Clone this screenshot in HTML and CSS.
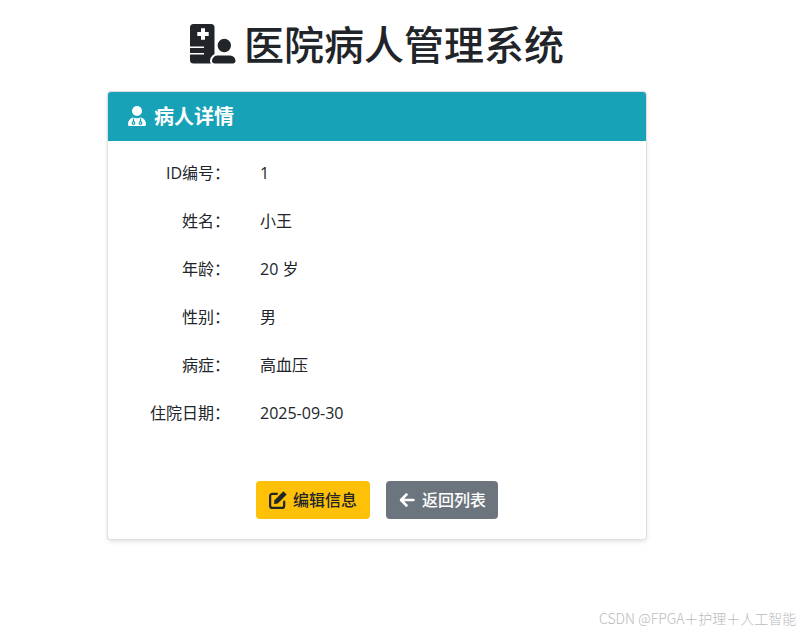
FILE: index.html
```html
<!DOCTYPE html>
<html lang="zh-CN">
<head>
<meta charset="utf-8">
<title>病人详情</title>
<link rel="stylesheet" href="styles.css">
</head>
<body>
<main class="page">
  <h1 class="title">
    <svg class="title-icon" viewBox="0 0 46 40" aria-hidden="true">
      <path fill="#212529" d="M3.500 0H21A3.500 3.500 0 0 1 24.500 3.500V36A3.500 3.500 0 0 1 21 39.500H3.500A3.500 3.500 0 0 1 0 36V3.500A3.500 3.500 0 0 1 3.500 0Z"/>
      <path fill="#fff" d="M11 4.300H15V8H18.700V12H15V15.700H11V12H7.300V8H11Z"/>
      <path fill="#fff" d="M0 22.500H14V24H0ZM0 29H14V30.500H0Z"/>
      <circle fill="#212529" stroke="#fff" stroke-width="2" cx="34.300" cy="21.500" r="7.700"/>
      <path fill="#212529" stroke="#fff" stroke-width="2" d="M28 30.500H40A6.500 6.500 0 0 1 46.500 37A3.500 3.500 0 0 1 43 40.500H24.500A3.500 3.500 0 0 1 21 37A6.500 6.500 0 0 1 28 30.500Z"/>
    </svg>
    <span>医院病人管理系统</span>
  </h1>
  <section class="card">
    <header class="card-header">
      <svg class="header-icon" viewBox="0 0 18 20" aria-hidden="true">
        <circle fill="#fff" cx="9" cy="5" r="5"/>
        <path fill="#fff" d="M5 11.500Q9 13 13 11.500Q18 13 18 18.500A1.500 1.500 0 0 1 16.500 20H1.500A1.500 1.500 0 0 1 0 18.500Q0 13 5 11.500Z"/>
        <g fill="none" stroke="#17a2b8" stroke-width="1.200">
          <circle cx="5.500" cy="17" r="1.300"/>
          <circle cx="12.500" cy="17" r="1.300"/>
          <path d="M5.500 15.500V12.500M12.500 15.500V12.500"/>
        </g>
      </svg>
      <span>病人详情</span>
    </header>
    <div class="card-body">
      <dl class="details">
        <div class="row"><dt>ID编号：</dt><dd>1</dd></div>
        <div class="row"><dt>姓名：</dt><dd>小王</dd></div>
        <div class="row"><dt>年龄：</dt><dd>20 岁</dd></div>
        <div class="row"><dt>性别：</dt><dd>男</dd></div>
        <div class="row"><dt>病症：</dt><dd>高血压</dd></div>
        <div class="row"><dt>住院日期：</dt><dd>2025-09-30</dd></div>
      </dl>
      <div class="actions">
        <a class="btn btn-warning" href="#">
          <svg class="btn-icon-lg" viewBox="0 0 16 16" aria-hidden="true">
            <path fill="none" stroke="currentColor" stroke-width="2" stroke-linecap="round" d="M13.500 9.500V13A2 2 0 0 1 11.500 15H3A2 2 0 0 1 1 13V4.500A2 2 0 0 1 3 2.500H7"/>
            <path fill="currentColor" d="M12.800 0.300L15.700 3.200L7.800 11.100L4.400 11.600L4.900 8.200Z"/>
          </svg>
          <span>编辑信息</span>
        </a>
        <a class="btn btn-secondary" href="#">
          <svg class="btn-icon" viewBox="0 0 16 16" aria-hidden="true">
            <path fill="none" stroke="currentColor" stroke-width="2.500" stroke-linecap="round" stroke-linejoin="round" d="M14.500 8H2M7.500 2.500L2 8L7.500 13.500"/>
          </svg>
          <span>返回列表</span>
        </a>
      </div>
    </div>
  </section>
</main>
<div class="watermark">CSDN @FPGA＋护理＋人工智能</div>
</body>
</html>
```
FILE: styles.css
```css
* { box-sizing: border-box; }
html, body { margin: 0; height: 100%; overflow: hidden; }
body {
  background: #fff;
  color: #212529;
  font-family: "Open Sans", "Noto Sans CJK SC", sans-serif;
  font-size: 16px;
  line-height: 24px;
}
.page { width: 540px; margin-left: 107px; padding-top: 19px; }
.title {
  display: flex;
  align-items: center;
  justify-content: center;
  gap: 8px;
  margin: 0 0 24px;
  height: 48px;
  font-size: 40px;
  line-height: 48px;
  font-weight: 500;
  font-family: "Noto Sans CJK SC", sans-serif;
}
.title-icon { width: 46px; height: 40px; flex: none; margin-top: 2px; }
.card {
  height: 449px;
  border: 1px solid rgba(0,0,0,.125);
  border-radius: 4px;
  box-shadow: 0 2px 4px rgba(0,0,0,.1);
  background: #fff;
  overflow: hidden;
}
.card-header {
  display: flex;
  align-items: center;
  gap: 8px;
  height: 49px;
  padding: 0 20px 2px;
  background: #17a2b8;
  color: #fff;
  font-size: 20px;
  font-weight: 700;
  font-family: "Noto Sans CJK SC", sans-serif;
}
.header-icon { width: 18px; height: 20px; flex: none; }
.card-body { padding: 20px 0; }
.details { margin: 0; }
.row { display: flex; height: 24px; margin-bottom: 24px; }
.row dt {
  width: 122px;
  text-align: right;
  font-weight: 400;
}
.row dd { margin: 0 0 0 30px; }
.actions { display: flex; justify-content: center; gap: 16px; margin-top: 56px; }
.btn {
  display: flex;
  align-items: center;
  height: 38px;
  border-radius: 4px;
  font-weight: 500;
  text-decoration: none;
}
.btn-icon { width: 16px; height: 16px; flex: none; }
.btn-icon-lg { width: 18px; height: 18px; flex: none; }
.btn-warning { background: #ffc107; color: #212529; padding: 0 13px; gap: 6px; }
.btn-secondary { background: #6c757d; color: #fff; padding: 0 12px 0 13px; gap: 7px; }
.watermark {
  position: absolute;
  left: 599px;
  top: 608px;
  width: 197px;
  overflow: hidden;
  white-space: nowrap;
  font-size: 14px;
  line-height: 20px;
  font-family: "Noto Sans CJK SC", sans-serif;
  font-weight: 300;
  color: #bbb;
}
```
